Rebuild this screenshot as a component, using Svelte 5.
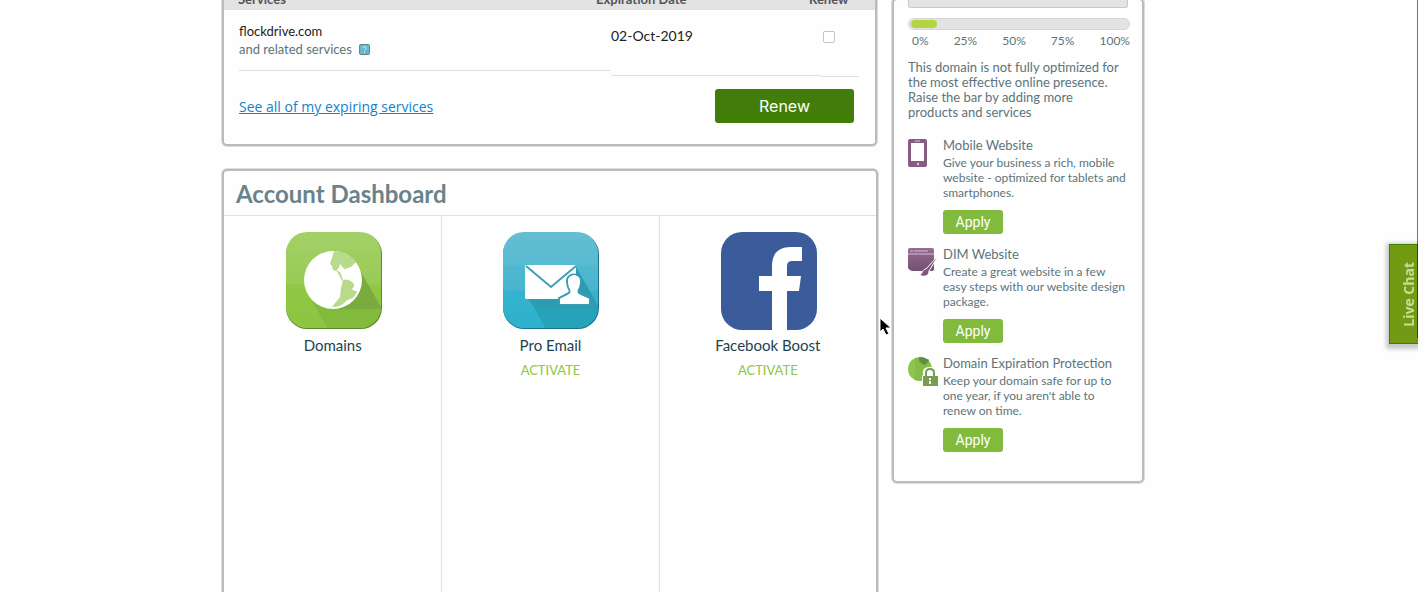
<script>
  const tiles = [
    { name: 'Domains', icon: 'globe', activate: false },
    { name: 'Pro Email', icon: 'mail', activate: true },
    { name: 'Facebook Boost', icon: 'facebook', activate: true }
  ];
  const offers = [
    { title: 'Mobile Website', icon: 'mobile', text: 'Give your business a rich, mobile website - optimized for tablets and smartphones.' },
    { title: 'DIM Website', icon: 'design', text: 'Create a great website in a few easy steps with our website design package.' },
    { title: 'Domain Expiration Protection', icon: 'lock', text: "Keep your domain safe for up to one year, if you aren't able to renew on time." }
  ];
  const progress = 12;
</script>

<div class="page">
  <main class="main">
    <section class="panel services">
      <table>
        <thead>
          <tr><th>Services</th><th>Expiration Date</th><th>Renew</th></tr>
        </thead>
        <tbody>
          <tr>
            <td class="name">
              <div class="domain">flockdrive.com</div>
              <div class="related">
                and related services
                <svg width="11" height="11" viewBox="0 0 11 11" aria-hidden="true">
                  <rect x=".5" y=".5" width="10" height="10" rx="1" fill="#5fb8d6" stroke="#6d8580" />
                  <path d="M3.7 4.2C3.7 2 7.3 2 7.3 4c0 1.300-1.800 1.200-1.800 2.600M5.500 7.600v1.200" fill="none" stroke="#d8f1f8" />
                </svg>
              </div>
            </td>
            <td class="date">02-Oct-2019</td>
            <td class="pick"><input type="checkbox" aria-label="Renew flockdrive.com" /></td>
          </tr>
        </tbody>
      </table>
      <div class="actions">
        <a href="#services">See all of my expiring services</a>
        <button class="renew">Renew</button>
      </div>
    </section>

    <section class="panel dashboard">
      <h2>Account Dashboard</h2>
      <div class="tiles">
        {#each tiles as tile}
          <div class="tile">
            {#if tile.icon === 'globe'}
              <svg width="98" height="98" viewBox="0 0 98 98" aria-hidden="true">
                <defs>
                  <linearGradient id="green" x2="0" y2="1">
                    <stop offset="0" stop-color="#a4d068" /><stop offset=".54" stop-color="#98cb55" /><stop offset=".55" stop-color="#90c846" /><stop offset="1" stop-color="#8bc541" />
                  </linearGradient>
                  <clipPath id="greenClip"><rect x="1" width="95" height="96" rx="21" /></clipPath>
                  <clipPath id="earth"><circle cx="48" cy="48" r="29" /></clipPath>
                </defs>
                <rect x="1" y="1" width="96" height="96" rx="21" fill="#5a8a2c" />
                <rect x="1" width="95" height="96" rx="21" fill="url(#green)" />
                <g clip-path="url(#greenClip)">
                  <path d="M76 40 97 77H54L48 60Z" fill="#7aab3f" />
                  <path d="M26 67 43 97H98V77H50Z" fill="#82bb3c" />
                </g>
                <circle cx="48" cy="48" r="29" fill="#fff" />
                <g clip-path="url(#earth)" fill="#b8da8b">
                  <path d="M49 19 45 32l2 2 1 4 3 1 3-3 1 3 5-2 6-2 4-4 8-1 2-14Z" />
                  <path d="m51 38 4 2 3 8-1 1-4-8Z" />
                  <path d="M58 48q6-2 11 4 1 2-2 5 1 2 5 2-2 7-7 8-4 1-7 5-4 3-11 3l8-10 1-9Z" />
                </g>
                <path d="m55 32 5 6-7 1Z" fill="#fff" />
              </svg>
            {:else if tile.icon === 'mail'}
              <svg width="98" height="98" viewBox="0 0 98 98" aria-hidden="true">
                <defs>
                  <linearGradient id="teal" x2="0" y2="1">
                    <stop offset="0" stop-color="#65bdd3" /><stop offset=".35" stop-color="#57bad1" /><stop offset=".36" stop-color="#50b7d0" /><stop offset=".61" stop-color="#48b5cf" /><stop offset=".62" stop-color="#33b3ce" /><stop offset="1" stop-color="#2eb1cd" />
                  </linearGradient>
                  <clipPath id="tealClip"><rect x="1" width="95" height="96" rx="21" /></clipPath>
                </defs>
                <rect x="1" y="1" width="96" height="96" rx="21" fill="#1c7190" />
                <rect x="1" width="95" height="96" rx="21" fill="url(#teal)" />
                <g clip-path="url(#tealClip)">
                  <path d="M73 33 98 77H34L25 66Z" fill="#2f9bb0" />
                  <path d="M32 76 44 97h54V76Z" fill="#26a2b9" />
                </g>
                <rect x="23" y="33" width="51" height="34" rx="1" fill="#fff" />
                <path d="m24 34 25 21 25-21" fill="none" stroke="#3f9fb3" stroke-width="2" />
                <path d="M57 73v-7l8-4c5-2 2-4 1-7l-1-5c-1-10 15-10 14 0l-1 5c-1 3-4 5 1 7l9 4v7Z" fill="#fff" stroke="#339eb4" stroke-width="2" />
                <path d="M58 72v-5l8-4c5-2 2-5 1-8l-1-5c-1-9 13-9 12 0l-1 5c-1 3-4 6 1 8l9 4v5Z" fill="#fff" />
              </svg>
            {:else}
              <svg width="98" height="98" viewBox="0 0 98 98" aria-hidden="true">
                <rect x="1" width="96" height="98" rx="21" fill="#3c5b9b" />
                <path d="M52 98V59H39V44h13V34c0-13 7-19 19-19h11v14h-9c-5 0-6 2-6 6v9h14l-2 15H67v39Z" fill="#fff" />
              </svg>
            {/if}
            <div class="label">{tile.name}</div>
            {#if tile.activate}<a href="#activate">ACTIVATE</a>{/if}
          </div>
        {/each}
      </div>
    </section>
    <svg class="cursor" width="13" height="19" viewBox="0 0 13 19" aria-hidden="true">
      <path d="M1 1v14l3-3 3 6 3-1-3-6h5Z" fill="#000" stroke="#fff" />
    </svg>
  </main>

  <aside class="panel side">
    <div class="box"></div>
    <div class="meter" role="progressbar" aria-label="Domain optimization" aria-valuenow={progress} aria-valuemin="0" aria-valuemax="100">
      <div class="fill" style="width: {progress}%"></div>
    </div>
    <div class="scale"><span>0%</span><span>25%</span><span>50%</span><span>75%</span><span>100%</span></div>
    <p class="intro">This domain is not fully optimized for the most effective online presence. Raise the bar by adding more products and services</p>
    {#each offers as offer}
      <article class="offer">
        {#if offer.icon === 'mobile'}
          <svg width="30" height="30" viewBox="0 0 30 30" aria-hidden="true">
            <rect x="0" y="1" width="19" height="28" rx="2" fill="#875c83" />
            <rect x="3" y="5" width="13" height="18" fill="#fff" />
            <path d="M7 3h5" stroke="#d9c5d8" /><circle cx="10" cy="26" r="1.200" fill="#d9c5d8" />
          </svg>
        {:else if offer.icon === 'design'}
          <svg width="30" height="30" viewBox="0 0 30 30" aria-hidden="true">
            <defs><linearGradient id="plum" x2="0" y2="1"><stop stop-color="#966c93" /><stop offset="1" stop-color="#74506f" /></linearGradient></defs>
            <path d="M2 1h22q2 0 2 2v19q0 2-2 2H4q-3-1-4-3V3q0-2 2-2Z" fill="url(#plum)" />
            <path d="M2 4h3M6 4h14M0 7h26" stroke="#d3bfd2" />
            <path d="m29 10-11 12c-4 0-3 5-7 6 7 3 10 0 10-4l8-13Z" fill="#80577b" stroke="#fff" />
          </svg>
        {:else}
          <svg width="30" height="31" viewBox="0 0 30 31" aria-hidden="true">
            <circle cx="12" cy="13" r="12" fill="#8cc54a" />
            <path d="M7 2v22q8 3 14-4V3Z" fill="#7fb64a" opacity=".5" />
            <path d="M11 1q7 0 10 4l-4 4-3-1-3-3Z" fill="#5d9144" />
            <path d="M15 19v-3q0-5 7-5t7 5v3l1 1v11H14V20Z" fill="#fff" />
            <path d="M18 21v-4q0-4 4-4t4 4v4" fill="none" stroke="#779d52" stroke-width="2" />
            <rect x="15" y="20" width="15" height="10" fill="#779d52" />
            <path d="M22 22v2m0 1v3" stroke="#fff" stroke-width="2" />
          </svg>
        {/if}
        <div class="copy">
          <h3>{offer.title}</h3>
          <p>{offer.text}</p>
          <button>Apply</button>
        </div>
      </article>
    {/each}
  </aside>
</div>
<button class="chat">Live Chat</button>
<div class="rail"></div>

<style>
  :global(body) { background: #fefefe; }
  * { box-sizing: border-box; }
  .page {
    display: flex;
    justify-content: center;
    align-items: flex-start;
    gap: 14px;
    height: 100vh;
    padding-right: 52px;
    overflow: hidden;
    font-family: Lato, "Open Sans", sans-serif;
    font-size: 13px;
    line-height: 15px;
    color: #5c747a;
  }
  .main {
    position: relative;
    flex: 0 1 656px;
    height: 100%;
    display: flex;
    flex-direction: column;
    gap: 23px;
  }
  .panel {
    border: 2px solid #b9bcbb;
    border-radius: 5px;
    box-shadow: 0 0 0 1px #dcdedd;
    background: #fefefe;
  }
  .services { margin-top: -22px; margin-right: 1px; height: 168px; }
  table, thead, tbody { display: block; }
  tr { display: grid; }
  th, td { padding: 0; text-align: left; }
  thead { background: #e3e3e3; padding: 9px 14px 1px; }
  thead tr { grid-template-columns: 358px 1fr 52px; line-height: 20px; }
  th { font-weight: 700; color: #555; }
  tbody { padding: 0 16px 0 15px; }
  tbody tr { grid-template-columns: 1fr 210px 38px; align-items: start; }
  td { border-bottom: 1px solid #e0e0e0; }
  .name { height: 61px; padding-top: 12px; line-height: 18px; }
  .domain { color: #222; }
  .related { display: flex; align-items: center; gap: 7px; }
  .date { height: 66px; padding-top: 16px; line-height: 20px; font-size: 14px; color: #222; }
  .pick { height: 67px; padding: 21px 0 0 2px; line-height: 12px; }
  input {
    appearance: none;
    display: block;
    width: 12px;
    height: 12px;
    margin: 0;
    border: 1px solid #c4c4c4;
    border-radius: 2px;
    background: #fff;
  }
  .actions {
    display: flex;
    justify-content: space-between;
    align-items: center;
    padding: 12px 21px 0 15px;
  }
  .actions a { font: 14px "Open Sans", sans-serif; color: #1482cc; text-decoration: underline; }
  button {
    border: 0;
    border-radius: 3px;
    background: #82ba3e;
    color: #fff;
    font-family: Roboto, sans-serif;
    padding: 0;
  }
  .renew { width: 139px; height: 34px; background: #417d08; font-size: 16px; font-family: Inter, sans-serif; }
  .dashboard { flex: 1; margin-bottom: -10px; display: flex; flex-direction: column; }
  h2 {
    margin: 0;
    padding: 7px 12px 5px;
    border-bottom: 1px solid #e1e3e2;
    font-size: 24px;
    font-weight: 700;
    line-height: 32px;
    color: #6a838a;
  }
  .tiles { flex: 1; display: grid; grid-template-columns: repeat(3, 1fr); }
  .tile { display: flex; flex-direction: column; align-items: center; padding-top: 16px; }
  .tile svg { margin-left: 2px; }
  .tile + .tile { border-left: 1px solid #e1e3e2; }
  .label { margin-top: 5px; font-size: 15px; line-height: 20px; color: #1e424e; }
  .tile a { margin-top: 7px; font-size: 13px; line-height: 16px; color: #8dc63f; text-decoration: none; }
  .cursor { position: absolute; left: 657px; top: 317px; z-index: 2; }
  .side { flex: 0 0 252px; height: 485px; margin-top: -2px; padding: 0 12px 0 14px; }
  .box { height: 8px; margin-right: 2px; border: 1px solid #c6c9c7; border-top: 0; border-radius: 0 0 3px 3px; background: #e4e4e4; }
  .meter { height: 12px; margin-top: 10px; padding: 1px 2px; border: 1px solid #d4d6d5; border-radius: 6px; background: #e3e3e3; }
  .fill { height: 8px; border-radius: 4px; background: #b3d640; }
  .scale { display: flex; justify-content: space-between; padding: 3px 0 0 4px; font-size: 12px; }
  .intro { margin: 12px 0 17px; padding-right: 4px; }
  .offer { display: grid; grid-template-columns: 30px 1fr; gap: 5px; margin-bottom: 12px; }
  .offer svg { margin-top: 1px; }
  h3 { margin: 0 0 2px; font-size: 13px; font-weight: 400; line-height: 16px; }
  .offer p { margin: 0 0 10px; font-size: 12px; line-height: 15px; }
  .offer button { display: block; width: 60px; height: 24px; font-size: 14px; }
  .chat {
    position: fixed;
    right: 0;
    top: 244px;
    width: 29px;
    height: 100px;
    padding-left: 8px;
    border: 1px solid #3c8000;
    border-right: 0;
    border-radius: 0;
    box-shadow: 0 2px 4px 3px #c8cac9;
    background: #729a12;
    color: #c5dc9a;
    font: 700 14px "Open Sans", sans-serif;
    writing-mode: sideways-lr;
  }
  .rail { position: fixed; right: 0; top: 0; width: 1px; height: 338px; background: rgba(0, 0, 0, .55); }
</style>
